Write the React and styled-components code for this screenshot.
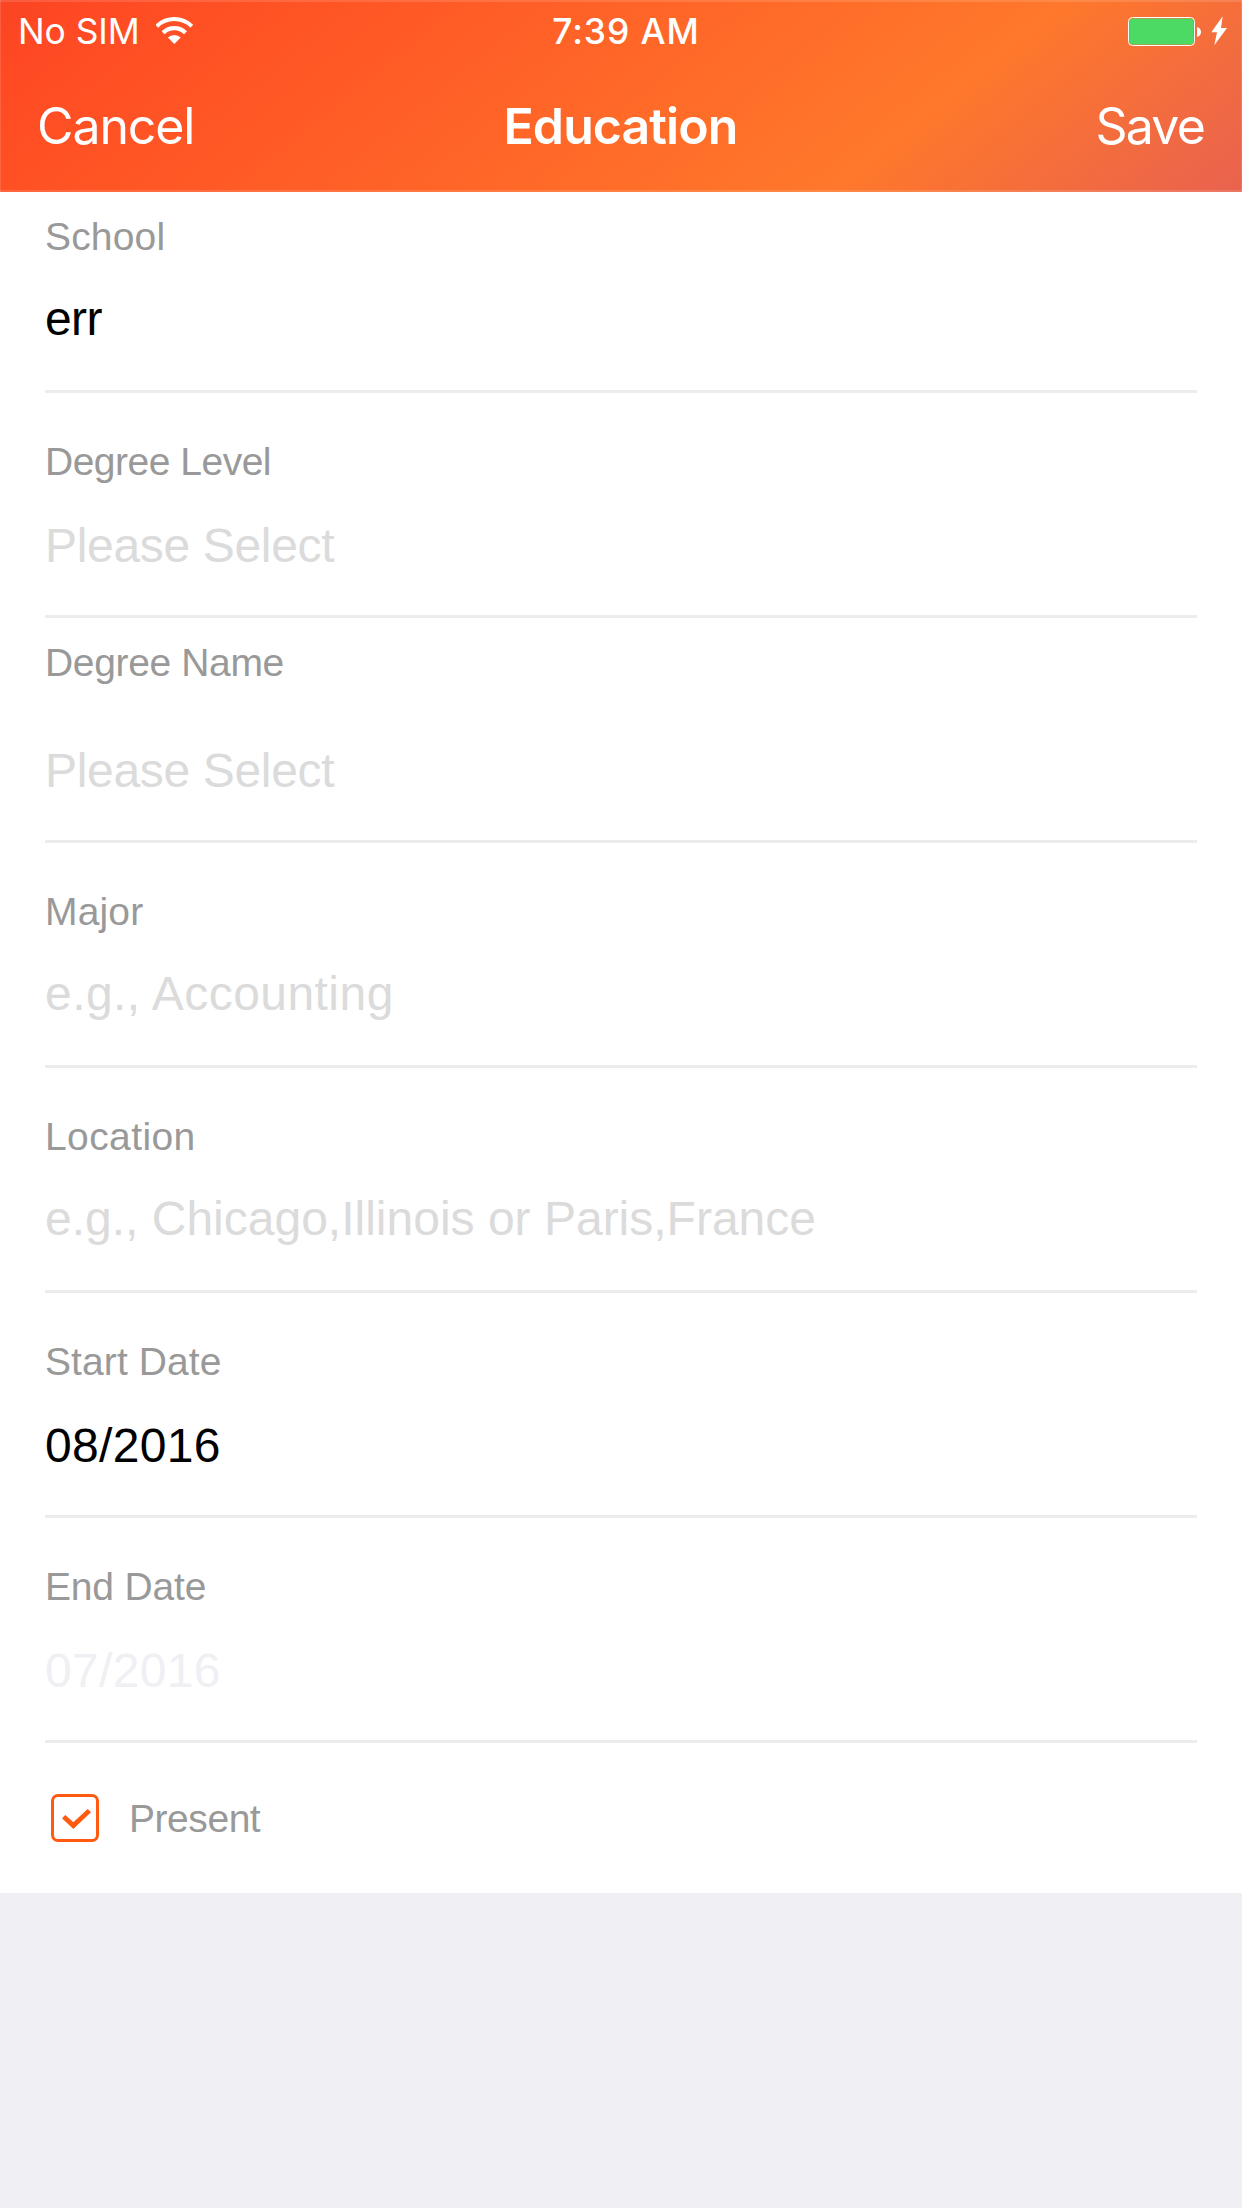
import React from "react";
import styled, { createGlobalStyle } from "styled-components";

const GlobalStyle = createGlobalStyle`
  * {
    box-sizing: border-box;
  }
  body {
    margin: 0;
    background: #efeff4;
    font-family: "Liberation Sans", Arial, sans-serif;
  }
`;

const Screen = styled.div`
  display: flex;
  flex-direction: column;
  width: 1242px;
  min-height: 2208px;
  background: #efeff4;
`;

const Header = styled.header`
  height: 192px;
  color: #fff;
  background: linear-gradient(141deg, #fa4423 0%, #ff4a23 7%, #ff782b 72%, #e9624f 100%);
  box-shadow:
    inset 0 2px rgba(255, 255, 255, 0.13),
    inset 0 -2px rgba(255, 255, 255, 0.13),
    inset 1px 0 rgba(255, 255, 255, 0.13),
    inset -1px 0 rgba(255, 255, 255, 0.13);
`;

const StatusBar = styled.div`
  display: grid;
  grid-template-columns: 1fr auto 1fr;
  align-items: center;
  height: 60px;
  padding: 0 14px 0 18px;
`;

const StatusGroup = styled.div`
  display: flex;
  align-items: center;
  justify-content: ${({ $end }) => ($end ? "flex-end" : "flex-start")};
  gap: ${({ $gap }) => $gap}px;
`;

const StatusText = styled.span`
  font-family: Inter, sans-serif;
  font-size: 35.4px;
  font-weight: ${({ $weight }) => $weight || 400};
  line-height: 60px;
  padding-top: 2px;
  letter-spacing: ${({ $tracking }) => $tracking}px;
  white-space: nowrap;
`;

const Clock = styled(StatusText)`
  padding-left: 6px;
`;

const NavBar = styled.nav`
  display: grid;
  grid-template-columns: 1fr auto 1fr;
  align-items: center;
  height: 132px;
  padding: 0 38px 0 37px;
`;

const NavButton = styled.button`
  justify-self: ${({ $side }) => $side};
  border: 0;
  padding: 0;
  background: none;
  color: inherit;
  font-family: Inter, sans-serif;
  font-size: 50px;
  line-height: 132px;
  letter-spacing: ${({ $tracking }) => $tracking}px;
`;

const Title = styled.h1`
  margin: 0;
  font-family: Inter, sans-serif;
  font-size: 50px;
  font-weight: 600;
  line-height: 132px;
  letter-spacing: -0.9px;
`;

const Form = styled.main`
  height: 1701px;
  padding: 0 45px;
  background: #fff;
`;

const Field = styled.section`
  display: flex;
  flex-direction: column;
  height: ${({ $compact }) => ($compact ? 201 : 225)}px;
  padding-top: ${({ $labelTop }) => $labelTop}px;
  border-bottom: 3px solid #ececec;
`;

const Label = styled.span`
  color: #999;
  font-size: 39px;
  line-height: 49px;
  letter-spacing: ${({ $tracking }) => $tracking}px;
  white-space: nowrap;
`;

const tones = { filled: "#000", placeholder: "#dbdbdb", disabled: "#efeff4" };

const Value = styled.span`
  margin-top: ${({ $gap }) => $gap}px;
  color: ${({ $tone }) => tones[$tone]};
  font-size: 48px;
  line-height: 61px;
  letter-spacing: ${({ $tracking }) => $tracking}px;
  white-space: nowrap;
`;

const PresentRow = styled.label`
  display: flex;
  align-items: flex-start;
  gap: 30px;
  padding: 51px 6px 0;
`;

const Checkbox = styled.span`
  width: 48px;
  height: 48px;
  border: 3px solid #ff5a10;
  border-radius: 7px;
`;

const Icon = styled.svg`
  display: block;
  flex: none;
`;

const fields = [
  { label: "School", lt: 0.18, value: "err", vt: -0.6, tone: "filled", top: 20, gap: 27, compact: true },
  { label: "Degree Level", lt: -0.5, value: "Please Select", vt: -0.33, tone: "placeholder", top: 44, gap: 29 },
  { label: "Degree Name", lt: -0.35, value: "Please Select", vt: -0.33, tone: "placeholder", top: 20, gap: 53 },
  { label: "Major", lt: 0.17, value: "e.g., Accounting", vt: 0.45, tone: "placeholder", top: 44, gap: 27 },
  { label: "Location", lt: 0.4, value: "e.g., Chicago,Illinois or Paris,France", vt: 0, tone: "placeholder", top: 44, gap: 27 },
  { label: "Start Date", lt: 0.1, value: "08/2016", vt: 0.32, tone: "filled", top: 44, gap: 29 },
  { label: "End Date", lt: -0.18, value: "07/2016", vt: 0.32, tone: "disabled", top: 44, gap: 29 },
];

function WifiIcon() {
  return (
    <Icon width="38" height="30" viewBox="0 0 38 30" fill="none" stroke="#fff">
      <path d="M0.8 10.2A25 25 0 0 1 35.8 10.2" strokeWidth="4" />
      <path d="M7.1 16.7A15.9 15.9 0 0 1 29.5 16.7" strokeWidth="4.2" />
      <path d="M18.3 28L11.9 21.6A9.1 9.1 0 0 1 24.7 21.6Z" fill="#fff" stroke="none" />
    </Icon>
  );
}

function BatteryIcon() {
  return (
    <Icon width="73" height="30" viewBox="0 0 73 30">
      <rect x="0.5" y="1.5" width="66" height="28" rx="4" fill="none" stroke="#fff" />
      <rect x="1.7" y="2.5" width="63.8" height="26" rx="3" fill="#4cd964" />
      <path d="M69 11C74.3 12 74.3 20 69 21Z" fill="#fff" />
    </Icon>
  );
}

function BoltIcon() {
  return (
    <Icon width="17" height="30" viewBox="0 0 17 30">
      <path d="M11.7 0.3L0.3 16.3H6L3.3 29.3L16 12H10Z" fill="#fff" />
    </Icon>
  );
}

function CheckIcon() {
  return (
    <Icon width="42" height="42" viewBox="3 3 42 42">
      <path d="M11 24.2L14.3 21L22.3 28.3L36.7 15L40 18.3L22.3 35Z" fill="#ff5a10" />
    </Icon>
  );
}

export default function App() {
  return (
    <>
      <GlobalStyle />
      <Screen>
        <Header>
          <StatusBar>
            <StatusGroup $gap={16}>
              <StatusText $tracking={-0.07}>No SIM</StatusText>
              <WifiIcon />
            </StatusGroup>
            <Clock $weight={500} $tracking={0.9}>7:39 AM</Clock>
            <StatusGroup $end $gap={10}>
              <BatteryIcon />
              <BoltIcon />
            </StatusGroup>
          </StatusBar>
          <NavBar>
            <NavButton $side="start" $tracking={-1.1}>Cancel</NavButton>
            <Title>Education</Title>
            <NavButton $side="end" $tracking={-1.8}>Save</NavButton>
          </NavBar>
        </Header>
        <Form>
          {fields.map((f) => (
            <Field key={f.label} $compact={f.compact} $labelTop={f.top}>
              <Label $tracking={f.lt}>{f.label}</Label>
              <Value $tone={f.tone} $gap={f.gap} $tracking={f.vt}>{f.value}</Value>
            </Field>
          ))}
          <PresentRow>
            <Checkbox>
              <CheckIcon />
            </Checkbox>
            <Label $tracking={-0.45}>Present</Label>
          </PresentRow>
        </Form>
      </Screen>
    </>
  );
}
